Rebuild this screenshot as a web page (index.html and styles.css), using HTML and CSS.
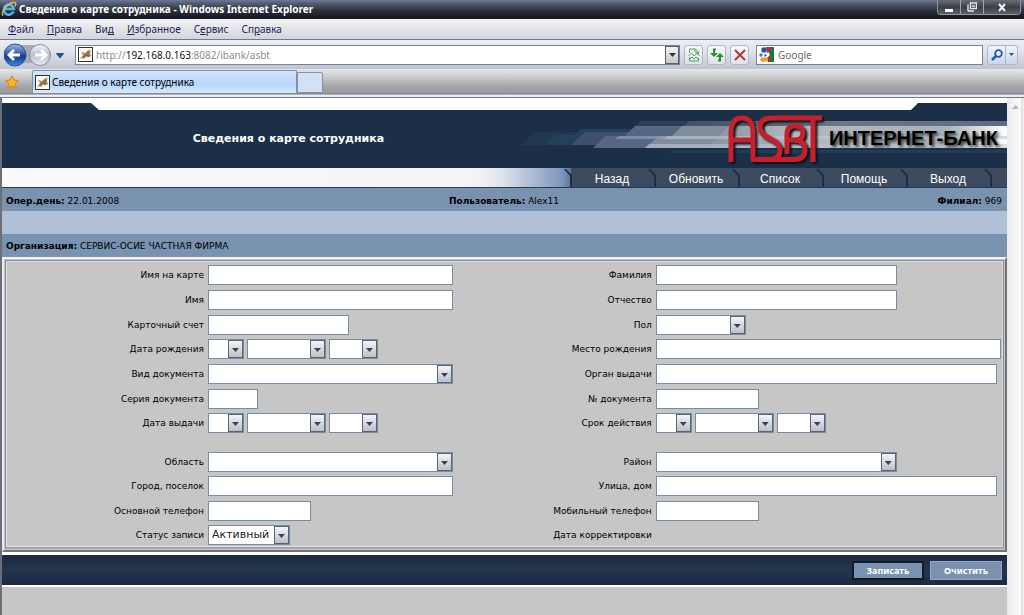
FILE: index.html
```html
<!DOCTYPE html>
<html lang="ru">
<head>
<meta charset="utf-8">
<title>Сведения о карте сотрудника</title>
<link rel="stylesheet" href="styles.css">
</head>
<body>
<svg class="defs" aria-hidden="true">
  <defs>
    <linearGradient id="gBack" x1="0" y1="0" x2="0" y2="1"><stop offset="0" stop-color="#9fb9e6"/><stop offset=".45" stop-color="#2f5cae"/><stop offset=".55" stop-color="#12388c"/><stop offset="1" stop-color="#3f8be0"/></linearGradient>
    <linearGradient id="gFwd" x1="0" y1="0" x2="0" y2="1"><stop offset="0" stop-color="#f4f6f8"/><stop offset=".5" stop-color="#b9c1ca"/><stop offset="1" stop-color="#e8edf2"/></linearGradient>
    <linearGradient id="gArt" x1="0" y1="0" x2="1" y2="0"><stop offset="0" stop-color="#8793a0"/><stop offset=".3" stop-color="#b3b9bf"/><stop offset=".8" stop-color="#a9b1b9"/><stop offset="1" stop-color="#ffffff"/></linearGradient>
    <linearGradient id="gDim" x1="0" y1="0" x2="1" y2="0"><stop offset="0" stop-color="#3d4d66"/><stop offset=".5" stop-color="#6b7885"/><stop offset="1" stop-color="#5c6c82"/></linearGradient>
  </defs>
  <symbol id="page" viewBox="0 0 15 15">
    <rect x=".5" y=".5" width="14" height="14" fill="#fbfaf5" stroke="#34322e"/>
    <path d="M2 12.500 5 8 3 5 7 6 10 3.500 12.500 2.500 12 6 13 9 10 10.500 8 9.500 6 12 4.500 11z" fill="#a58a5c"/>
    <path d="M5 10.500 8 7.500 11 9M9 5 11 6" stroke="#5d4a30" fill="none"/>
  </symbol>
</svg>

<header class="titlebar">
  <svg class="ie" width="16" height="16" viewBox="0 0 16 16"><path d="M12.500 10.500A5 5 0 1 1 12.800 8H4" fill="none" stroke="#4db4ec" stroke-width="2.600"/><path d="M2 14.500C-.5 12 5 3 12.500 1.500c3-.5 2.500 2 1.500 4" fill="none" stroke="#f0c04a" stroke-width="1.300"/></svg>
  <h1 class="titlebar__text">Сведения о карте сотрудника - Windows Internet Explorer</h1>
  <div class="winbtns">
    <button class="winbtn" aria-label="Свернуть"><svg width="10" height="10"><path d="M1 8.500h8" stroke="#fff" stroke-width="3"/></svg></button>
    <button class="winbtn" aria-label="Развернуть"><svg width="10" height="10"><path d="M1 9V2.500M3.500 1h6v5.500h-6zM5 4h3M1 9h6" stroke="#e4e6e8" stroke-width="1.400" fill="none"/></svg></button>
    <button class="winbtn winbtn--close" aria-label="Закрыть"><svg width="10" height="10"><path d="M2 2l6 7M8 2 2 9" stroke="#f0f0f0" stroke-width="2"/></svg></button>
  </div>
</header>

<nav class="menubar">
  <a href="#"><u>Ф</u>айл</a><a href="#"><u>П</u>равка</a><a href="#">Ви<u>д</u></a><a href="#"><u>И</u>збранное</a><a href="#">С<u>е</u>рвис</a><a href="#">Сп<u>р</u>авка</a>
</nav>

<div class="toolbar">
  <button class="travel" aria-label="Назад и вперед">
    <svg width="62" height="26" viewBox="0 0 62 26">
      <rect x="4" y="3" width="42" height="18" rx="9" fill="#a7adb4"/>
      <circle cx="11" cy="13" r="11" fill="url(#gBack)" stroke="#33507c"/>
      <path d="M5 13h11M10 8l-5 5 5 5" fill="none" stroke="#fff" stroke-width="2.800"/>
      <circle cx="36" cy="13" r="10.500" fill="url(#gFwd)" stroke="#858d96"/>
      <path d="M31 13h10M37 8l5 5-5 5" fill="none" stroke="#fff" stroke-width="2.800"/>
      <path d="M52 11h8l-1 2-3 3.500-3-3.500z" fill="#27528f"/>
    </svg>
  </button>
  <div class="address">
    <svg width="15" height="15"><use href="#page"/></svg>
    <div class="address__text" role="textbox" contenteditable="true" aria-label="Адрес">http://<span class="host">192.168.0.163</span>:8082/ibank/asbt</div>
    <button class="drop" aria-label="Показать адреса"><svg width="7" height="4"><path d="M0 0h7L3.500 4z" fill="#333"/></svg></button>
  </div>
  <div class="tools">
    <button class="tool" aria-label="Режим совместимости"><svg width="12" height="14"><path d="M1.500 5V1h6l3 3v2M1.500 9v4h9v-3M7 1v3h3M.5 8l3-3 2.500 3 3-3 2.500 3M2 11l2-2 2 2 2-2 2 2" fill="none" stroke="#57a04f"/></svg></button>
    <button class="tool" aria-label="Обновить"><svg width="14" height="14"><path d="M6 1.500 H4V6M8 12.500h2V8" fill="none" stroke="#2f8a2b" stroke-width="2"/><path d="M0 5h8L4 9zM6 9h8l-4-4z" fill="#2f8a2b"/></svg></button>
    <button class="tool" aria-label="Остановить"><svg width="12" height="12"><path d="M1 1l10 10M11 1 1 11" stroke="#b5373b" stroke-width="2"/></svg></button>
  </div>
  <div class="search">
    <svg width="15" height="15"><rect width="15" height="15" fill="#fff"/><path d="M7 0h8v15H9l2-7z" fill="#157a3c"/><path d="M7 0h5v4l-4 2z" fill="#c8252c"/><path d="M8 11l3-3v7H9z" fill="#c8252c"/><circle cx="5" cy="3" r="2.700" fill="#1f4fb0"/><circle cx="2" cy="8" r="1.700" fill="#3f79d0"/><path d="M5 7l3 1-2 2z" fill="#1f4fb0"/><ellipse cx="5" cy="12.500" rx="3.800" ry="2.300" fill="#e9a32c"/></svg>
    <input class="search__input" type="text" placeholder="Google" aria-label="Поиск">
  </div>
  <div class="find">
    <button class="find__go" aria-label="Найти"><svg width="12" height="12"><circle cx="7.500" cy="4.500" r="3.300" fill="#eef5ff" stroke="#2257b5" stroke-width="1.800"/><path d="M5 7 1 11" stroke="#2257b5" stroke-width="2.500"/></svg></button>
    <button class="find__more" aria-label="Параметры поиска"><svg width="5" height="3"><path d="M0 0h5L2.500 3z" fill="#27528f"/></svg></button>
  </div>
</div>

<div class="tabs">
  <button class="fav" aria-label="Избранное"><svg width="14" height="14" viewBox="0 0 14 14"><path d="M7 .8 9 5l4.500.5-3.200 3.200.8 4.600L7 11l-4.100 2.300.8-4.600L.5 5.500 5 5z" fill="#fbb52c" stroke="#d9801b"/></svg></button>
  <button class="tab"><svg width="15" height="15"><use href="#page"/></svg><span>Сведения о карте сотрудника</span></button>
  <button class="newtab" aria-label="Новая вкладка"></button>
</div>

<div class="viewport">
  <main class="page">
    <div class="banner">
      <div class="banner__strip"></div>
      <svg class="banner__art" width="490" height="65" viewBox="0 0 490 65">
        <path d="M18 29H60L48 42H4z" fill="#20394e"/>
        <path d="M64 26H490V42H28L38 32H58z" fill="#24405a"/>
        <path d="M68 29H490V42H54z" fill="#3f506d"/>
        <path d="M124 18H490V23H118z" fill="#2a3f57"/>
        <path d="M118 23H490V45H76L88 33H108z" fill="#566786"/>
        <path d="M172 18H490V30H160z" fill="url(#gDim)"/>
        <path d="M165 23H490V45H128L142 33H155z" fill="#7f8d9d"/>
        <path d="M102 33H490V36H98z" fill="#8e9bb0" opacity=".7"/>
        <path d="M212 23H490V45H190z" fill="url(#gArt)"/>
        <path d="M150 33H490V36H147zM132 41H490V45H128z" fill="#bcc5d3" opacity=".6"/>
        <path d="M155 47H490V50H152z" fill="#223c52"/>
      </svg>
      <div class="banner__row">
        <h2 class="banner__title">Сведения о карте сотрудника</h2>
        <div class="brand">
          <svg class="brand__logo" width="98" height="52" viewBox="0 0 98 52" role="img" aria-label="ASBT">
            <g fill="none" stroke="#c5202c" stroke-width="5">
              <path d="M5 49V20Q5 5 16 5Q27 5 27 20V46.500M5 27H27"/>
              <path d="M96 5H46Q34 5 34 14Q34 21 43 25Q54 30 54 37Q54 46.500 44 46.500H25"/>
              <path d="M44 46.500H68Q79 46.500 79 37Q79 27 68 27H61"/>
              <path d="M61 41V21Q61 13 69 13Q77 13 77 20Q77 27 68 27"/>
              <path d="M87 5V49"/>
            </g>
          </svg>
          <span class="brand__name">ИНТЕРНЕТ-БАНК</span>
        </div>
      </div>
    </div>
    <nav class="nav">
      <a href="#">Назад</a><a href="#">Обновить</a><a href="#">Список</a><a href="#">Помощь</a><a href="#">Выход</a>
    </nav>
    <div class="info">
      <span><b>Опер.день:</b> 22.01.2008</span>
      <span><b>Пользователь:</b> Alex11</span>
      <span><b>Филиал:</b> 969</span>
    </div>
    <div class="spacer"></div>
    <div class="info info--org"><span><b>Организация:</b> СЕРВИС-ОСИЕ ЧАСТНАЯ ФИРМА</span></div>

    <form class="form" id="card">
      <div class="fields">
        <label for="f1">Имя на карте</label><div class="cell"><input id="f1" class="w-full"></div>
        <label for="f2">Фамилия</label><div class="cell"><input id="f2" class="w-name"></div>
        <label for="f3">Имя</label><div class="cell"><input id="f3" class="w-full"></div>
        <label for="f4">Отчество</label><div class="cell"><input id="f4" class="w-name"></div>
        <label for="f5">Карточный счет</label><div class="cell"><input id="f5" class="w-acc"></div>
        <label for="f6">Пол</label><div class="cell"><span class="sel w-sex"><select id="f6"><option></option></select></span></div>
        <label for="f7">Дата рождения</label><div class="cell"><span class="sel w-day"><select id="f7"><option></option></select></span><span class="sel w-month"><select aria-label="Месяц рождения"><option></option></select></span><span class="sel w-year"><select aria-label="Год рождения"><option></option></select></span></div>
        <label for="f8">Место рождения</label><div class="cell"><input id="f8" class="w-place"></div>
        <label for="f9">Вид документа</label><div class="cell"><span class="sel w-full"><select id="f9"><option></option></select></span></div>
        <label for="f10">Орган выдачи</label><div class="cell"><input id="f10" class="w-wide"></div>
        <label for="f11">Серия документа</label><div class="cell"><input id="f11" class="w-series"></div>
        <label for="f12">№ документа</label><div class="cell"><input id="f12" class="w-phone"></div>
        <label for="f13">Дата выдачи</label><div class="cell"><span class="sel w-day"><select id="f13"><option></option></select></span><span class="sel w-month"><select aria-label="Месяц выдачи"><option></option></select></span><span class="sel w-year"><select aria-label="Год выдачи"><option></option></select></span></div>
        <label for="f14">Срок действия</label><div class="cell"><span class="sel w-day"><select id="f14"><option></option></select></span><span class="sel w-month"><select aria-label="Месяц окончания"><option></option></select></span><span class="sel w-year"><select aria-label="Год окончания"><option></option></select></span></div>
        <label for="f15">Область</label><div class="cell"><span class="sel w-full"><select id="f15"><option></option></select></span></div>
        <label for="f16">Район</label><div class="cell"><span class="sel w-name"><select id="f16"><option></option></select></span></div>
        <label for="f17">Город, поселок</label><div class="cell"><input id="f17" class="w-full"></div>
        <label for="f18">Улица, дом</label><div class="cell"><input id="f18" class="w-wide"></div>
        <label for="f19">Основной телефон</label><div class="cell"><input id="f19" class="w-phone"></div>
        <label for="f20">Мобильный телефон</label><div class="cell"><input id="f20" class="w-phone"></div>
        <label for="f21">Статус записи</label><div class="cell"><span class="sel w-status"><select id="f21"><option>Активный</option></select></span></div>
        <span class="caption">Дата корректировки</span><div class="cell"></div>
      </div>
    </form>
    <div class="actions">
      <button class="btn btn--default" type="submit" form="card">Записать</button>
      <button class="btn" type="reset" form="card">Очистить</button>
    </div>
  </main>
  <div class="scroll"><svg width="7" height="4"><path d="M0 4h7L3.500 0z" fill="#b4b4b4"/></svg></div>
</div>
</body>
</html>
```
FILE: styles.css
```css
*, *::before, *::after { box-sizing: border-box; }
html, body { height: 100%; }
body {
  margin: 0;
  display: flex;
  flex-direction: column;
  overflow: hidden;
  background: #c6c6c6;
  font-family: "DejaVu Sans", sans-serif;
  color: #000;
}
button { margin: 0; padding: 0; border: 0; background: none; font: inherit; color: inherit; }
a { color: inherit; text-decoration: none; }
svg { display: block; flex: none; }
.defs { position: absolute; width: 0; height: 0; }

/* browser frame */
.titlebar {
  flex: none;
  display: flex;
  align-items: center;
  height: 19px;
  padding-left: 1px;
  background: linear-gradient(#6f7896, #4d5568 25%, #2b303c 60%, #171824);
  border-bottom: 1px solid #1b1b26;
}
.titlebar__text {
  flex: 1;
  margin: 0 0 0 2px;
  font: bold 10px/18px "Noto Sans", sans-serif;
  color: #fff;
}
.winbtns {
  align-self: flex-start;
  display: flex;
  height: 15px;
  margin-right: 3px;
  border: 1px solid #8f959c;
  border-top: 0;
  border-radius: 0 0 4px 4px;
  overflow: hidden;
}
.winbtn {
  display: flex;
  align-items: center;
  justify-content: center;
  width: 23px;
  background: linear-gradient(#6a6f75, #3c4046 50%, #5a6066);
  border-right: 1px solid #a0a5aa;
}
.winbtn--close { width: 36px; border-right: 0; }

.menubar {
  flex: none;
  display: flex;
  gap: 13px;
  height: 21px;
  padding-left: 8px;
  font: 10px/21px "Noto Sans", sans-serif;
  color: #1d1d5e;
  background: linear-gradient(#f2f2f6, #d4d5db);
  border-bottom: 1px solid #777b86;
}
.toolbar {
  flex: none;
  display: flex;
  align-items: center;
  height: 29px;
  padding: 0 6px 0 4px;
  background: linear-gradient(#e9eff5, #dfe3ea 40%, #bfc4cf);
}
.travel { margin-right: 9px; }
.address, .search {
  display: flex;
  align-items: center;
  height: 20px;
  padding-left: 2px;
  background: #fff;
  border: 1px solid #7485a0;
}
.address { flex: 1; }
.address__text {
  flex: 1;
  margin-left: 3px;
  font: 10px/18px "Noto Sans", sans-serif;
  color: #8c8c8c;
  outline: 0;
}
.host { color: #111; }
.drop {
  display: flex;
  align-items: center;
  justify-content: center;
  width: 14px;
  height: 18px;
  background: linear-gradient(#f4f4f6, #c6c9ce);
  border: 1px solid #5a6068;
}
.tools { display: flex; gap: 4px; margin: 0 7px 0 4px; }
.tool {
  display: flex;
  align-items: center;
  justify-content: center;
  width: 19px;
  height: 20px;
  background: linear-gradient(#f5f7fa, #dfe3ea);
  border: 1px solid #b3b8c2;
  border-radius: 3px;
}
.search { width: 227px; }
.search__input {
  flex: 1;
  min-width: 0;
  padding: 0 4px;
  border: 0;
  outline: 0;
  background: none;
  font: 10px/18px "Noto Sans", sans-serif;
}
.search__input::placeholder { color: #6b6b6b; opacity: 1; }
.find {
  display: flex;
  width: 31px;
  height: 20px;
  margin-left: 4px;
  background: linear-gradient(#f0f4fa, #c9d7ee);
  border: 1px solid #aeb7c8;
  border-radius: 3px;
}
.find__go, .find__more { display: flex; align-items: center; justify-content: center; }
.find__go { flex: 1; }
.find__more { width: 12px; border-left: 1px solid #aeb7c8; }

.tabs {
  flex: none;
  display: flex;
  align-items: flex-end;
  height: 29px;
  padding-bottom: 4px;
  background: linear-gradient(#e6e7ea, #cfd0d2 25%, #a6a7a6 60%, #9a9b9f 24px, #74777f 25px, #eef1f8 26px, #dfe3ec 29px);
  border-bottom: 1px solid #787880;
}
.fav {
  display: flex;
  align-items: center;
  justify-content: center;
  width: 32px;
  height: 22px;
  padding-right: 8px;
}
.tab {
  display: flex;
  align-items: center;
  gap: 2px;
  width: 265px;
  height: 23px;
  padding-left: 2px;
  font: 10px/20px "Noto Sans", sans-serif;
  text-align: left;
  background: linear-gradient(#d5e6fb, #b8d6f8 60%, #d6e8fd);
  border: 1px solid #7f90a8;
  border-bottom: 0;
  border-radius: 2px 2px 0 0;
}
.newtab {
  width: 26px;
  height: 21px;
  background: #d2e1f3;
  border: 1px solid #8292a8;
  border-radius: 0 2px 0 0;
}

/* document */
.viewport {
  flex: 1;
  min-height: 0;
  display: flex;
  border-left: 2px solid #6d6f78;
}
.page { flex: 1; min-width: 0; overflow: hidden; }
.scroll {
  width: 17px;
  padding: 7px 5px;
  background: linear-gradient(90deg, #e9e9e9, #fafafa 70%, #fff 80%, #dedede 85%, #f4f4f4);
}

.banner { position: relative; height: 70px; background: #1c2f48; border-top: 5px solid #fff; }
.banner__strip {
  height: 7px;
  background: #fff;
  clip-path: polygon(89px 0, calc(100% - 89px) 0, calc(100% - 96px) 100%, 97px 100%);
}
.banner__art { position: absolute; right: 0; top: 0; }
.banner__row { position: relative; display: flex; align-items: center; height: 58px; }
.banner__title {
  width: 57%;
  margin: 0;
  font: bold 11px/16px "DejaVu Sans", sans-serif;
  text-align: center;
  color: #fff;
}
.brand { flex: 1; display: flex; align-items: center; justify-content: flex-end; gap: 5px; padding-right: 9px; }
.brand__logo { filter: drop-shadow(2px 2px 1px #0a1018); }
.brand__name {
  padding-bottom: 3px;
  font: bold 20px/22px "Liberation Sans", sans-serif;
  color: #000;
  text-shadow: 2px 2px 3px #333;
}

.nav {
  display: flex;
  justify-content: flex-end;
  height: 20px;
  padding-right: 17px;
  background: linear-gradient(90deg, transparent calc(100% - 436px), #3d4b60 calc(100% - 436px)), linear-gradient(90deg, #fafafa, #f4f4f4 calc(100% - 530px), #dde3ec calc(100% - 505px), #7d96bb calc(100% - 445px), #5b7499 calc(100% - 436px));
  border-bottom: 1px solid #2a3a50;
}
.nav a {
  position: relative;
  width: 84px;
  padding-top: 3px;
  font: 12px/17px "Liberation Sans", sans-serif;
  text-align: center;
  color: #fff;
}
.nav a::after, .nav a:first-child::before {
  content: "";
  position: absolute;
  top: 1px;
  right: -2px;
  width: 8px;
  height: 18px;
  background: #1d2d44;
  clip-path: polygon(0 0, 2px 0, 100% 6px, 100% 100%, 6px 100%, 6px 7px);
}
.nav a:first-child::before { right: auto; left: -6px; }

.info {
  display: grid;
  grid-template-columns: 1fr auto 1fr;
  height: 23px;
  padding: 0 5px 0 4px;
  font: 9px/26px "DejaVu Sans", sans-serif;
  background: #7892b0;
}
.info span:last-child:not(:first-child) { text-align: right; }
.info b { font-weight: bold; }
.info--org { display: block; line-height: 24px; }
.spacer { height: 23px; background: #b0c0d6; }

.form {
  border: 2px solid #73737a;
  border-top-color: #f4f4f8;
  border-left-color: #e8e8ee;
  background: #c6c6c6;
  padding: 1px;
}
.fields {
  display: grid;
  grid-template-columns: 20% 25% 20% 35%;
  grid-template-rows: 25px 25px 24px 25px 25px 24px 39px 24px 25px 24px 22px;
  padding: 3px 1px 0;
  border: 2px solid #8a8a92;
  border-width: 1px 1px 2px;
  border-bottom-color: #a4a4aa;
  box-shadow: inset 0 0 0 1px #dcdce2;
}
.fields { padding-top: 4px; }
.fields label, .caption {
  padding-right: 2px;
  font: 9px/20px "DejaVu Sans", sans-serif;
  text-align: right;
  white-space: nowrap;
}
.cell { display: flex; gap: 3px; align-items: flex-start; padding-left: 2px; }
.cell input, .sel {
  height: 20px;
  padding: 0 3px;
  background: #fff;
  border: 1px solid #768ba4;
  border-radius: 0;
  font: 11px/18px "DejaVu Sans", sans-serif;
}
.sel { position: relative; padding: 0; }
.sel select {
  appearance: none;
  display: block;
  width: 100%;
  height: 18px;
  padding: 0 15px 0 3px;
  border: 0;
  background: none;
  font: 11px/18px "DejaVu Sans", sans-serif;
  color: #222;
}
.sel::before {
  content: "";
  position: absolute;
  top: 0;
  right: 0;
  width: 15px;
  height: 18px;
  background: linear-gradient(#f4f4f8, #bcbfc8);
  border: 1px solid #5d6470;
  pointer-events: none;
}
.sel::after {
  content: "";
  position: absolute;
  top: 8px;
  right: 4px;
  width: 7px;
  height: 4px;
  background: #3c3f4c;
  clip-path: polygon(0 0, 100% 0, 50% 100%);
  pointer-events: none;
}
.w-full { width: 245px; }
.w-name { width: 241px; }
.w-acc { width: 141px; }
.w-sex { width: 90px; }
.w-day { width: 36px; }
.w-month { width: 79px; }
.w-year { width: 49px; }
.w-place { width: 345px; }
.w-wide { width: 341px; }
.w-series { width: 50px; }
.w-phone { width: 103px; }
.w-status { width: 82px; }

.actions {
  display: flex;
  align-items: center;
  justify-content: flex-end;
  gap: 6px;
  height: 35px;
  padding: 0 5px;
  background: linear-gradient(#1b2942, #24364c 50%, #1b2942);
  border: solid #fff;
  border-width: 3px 0 2px;
}
.btn {
  width: 72px;
  height: 19px;
  font: bold 9px/15px "Noto Sans", sans-serif;
  color: #fff;
  background: #7892b0;
  border: 1px solid #93a9c4;
}
.btn--default { border: 2px solid #16181f; }
```
